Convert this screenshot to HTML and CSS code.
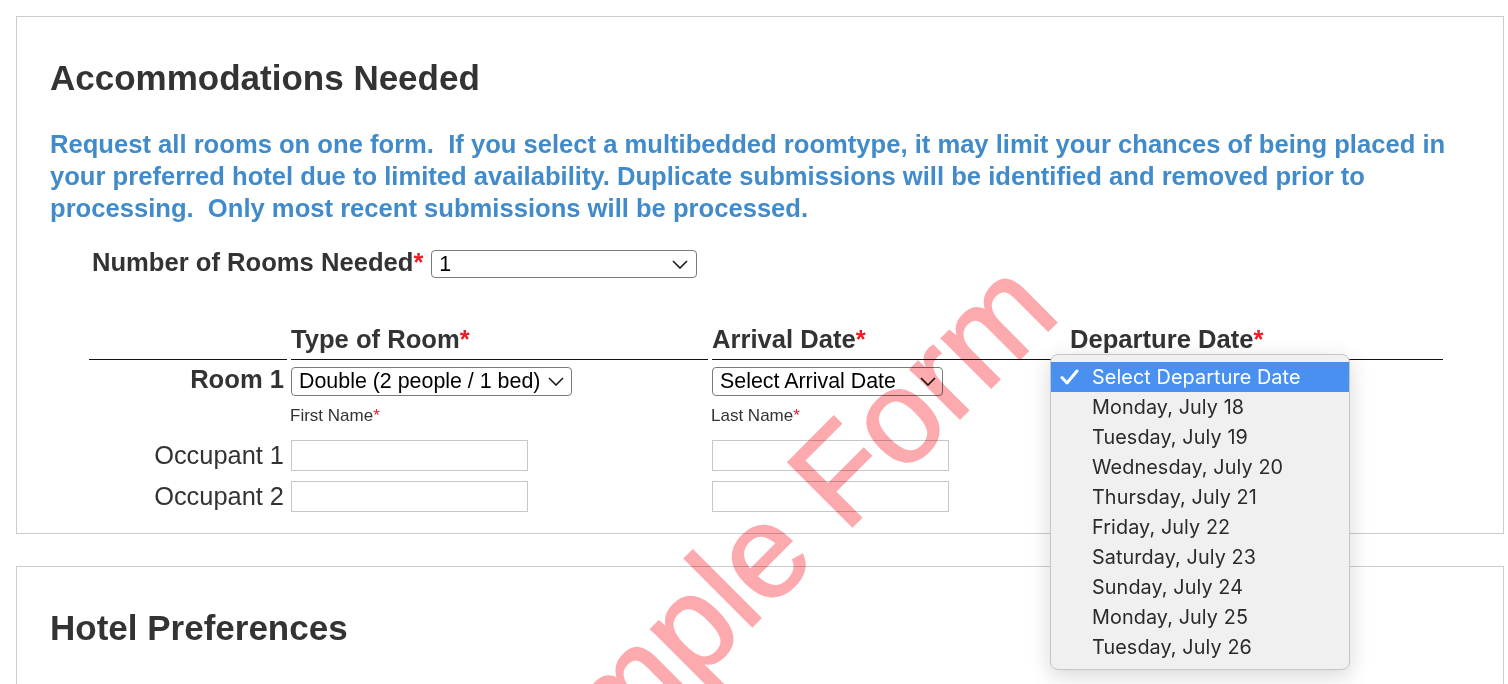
FILE: index.html
```html
<!DOCTYPE html>
<html lang="en">
<head>
  <meta charset="UTF-8">
  <meta name="viewport" content="width=device-width, initial-scale=1.0">
  <title>Accommodations Needed</title>
  <link rel="stylesheet" href="styles.css">
</head>
<body>
  <div class="page">
    <div class="card">
      <h2>Accommodations Needed</h2>
      <p class="notice">Request all rooms on one form.&nbsp; If you select a multibedded roomtype, it may limit your chances of being placed in<br>your preferred hotel due to limited availability. Duplicate submissions will be identified and removed prior to<br>processing.&nbsp; Only most recent submissions will be processed.</p>

      <div class="count-row">
        <label class="count-label">Number of Rooms Needed<span class="req">*</span></label>
        <div class="select select-count">
          <span>1</span>
          <svg class="chevron" width="16" height="9" viewBox="0 0 16 9"><polyline points="1,1 8,8 15,1"/></svg>
        </div>
      </div>

      <div class="rooms">
        <div class="th"></div>
        <div class="th">Type of Room<span class="req">*</span></div>
        <div class="th">Arrival Date<span class="req">*</span></div>
        <div class="th">Departure Date<span class="req">*</span></div>

        <div class="room-label">Room 1</div>
        <div class="room-cell">
          <div class="select">
            <span>Double (2 people / 1 bed)</span>
            <svg class="chevron" width="16" height="9" viewBox="0 0 16 9"><polyline points="1,1 8,8 15,1"/></svg>
          </div>
        </div>
        <div class="room-cell">
          <div class="select select-arrival">
            <span>Select Arrival Date</span>
            <svg class="chevron" width="16" height="9" viewBox="0 0 16 9"><polyline points="1,1 8,8 15,1"/></svg>
          </div>
        </div>
        <div class="room-cell departure">
          <div class="select select-departure"></div>
          <!-- open list of the departure select -->
          <ul class="menu">
            <li class="selected"><span class="check"><svg width="19" height="16" viewBox="0 0 19 16"><polyline points="2,8.5 7,14 17,2"/></svg></span>Select Departure Date</li>
            <li><span class="check"></span>Monday, July 18</li>
            <li><span class="check"></span>Tuesday, July 19</li>
            <li><span class="check"></span>Wednesday, July 20</li>
            <li><span class="check"></span>Thursday, July 21</li>
            <li><span class="check"></span>Friday, July 22</li>
            <li><span class="check"></span>Saturday, July 23</li>
            <li><span class="check"></span>Sunday, July 24</li>
            <li><span class="check"></span>Monday, July 25</li>
            <li><span class="check"></span>Tuesday, July 26</li>
          </ul>
        </div>

        <div></div>
        <div class="sub">First Name<span class="req">*</span></div>
        <div class="sub">Last Name<span class="req">*</span></div>
        <div></div>

        <div class="occ-label first">Occupant 1</div>
        <div class="occ-cell first"><input type="text"></div>
        <div class="occ-cell first"><input type="text"></div>
        <div></div>

        <div class="occ-label">Occupant 2</div>
        <div class="occ-cell"><input type="text"></div>
        <div class="occ-cell"><input type="text"></div>
        <div></div>
      </div>
    </div>

    <div class="card card-tall">
      <h2>Hotel Preferences</h2>
    </div>

    <div class="watermark">Sample Form</div>
  </div>
</body>
</html>
```

FILE: styles.css
```css
html, body {
  margin: 0;
  overflow: hidden;
  background: #fff;
}
body {
  font-family: "Liberation Sans", Arial, sans-serif;
  color: #333;
}
.page {
  position: relative;
  padding: 16px 4px 0 16px;
}
.card {
  border: 1px solid #ccc;
  background: #fff;
  padding: 41px 33px 21px;
}
.card-tall {
  margin-top: 32px;
  height: 300px;
}
h2 {
  margin: 0;
  font-size: 35px;
  line-height: 40px;
  font-weight: bold;
  color: #333;
}
.notice {
  margin: 30px 0 0;
  font-size: 25.6px;
  line-height: 32px;
  font-weight: bold;
  color: #428bca;
  white-space: nowrap;
}
.req {
  color: #ee1c25;
}
.count-row {
  display: flex;
  align-items: baseline;
  margin-top: 24px;
  padding-left: 42px;
}
.count-label {
  font-size: 25.6px;
  line-height: 29px;
  font-weight: bold;
  margin-right: 8px;
}
.select {
  display: flex;
  align-items: center;
  box-sizing: border-box;
  width: fit-content;
  height: 28px;
  border: 1px solid #7a7a7a;
  border-radius: 4px;
  padding: 0 7px 0 7px;
  font-size: 21.4px;
  line-height: 26px;
  color: #000;
  background: #fff;
  white-space: nowrap;
}
.select span {
  flex: 1;
}
.chevron {
  margin-left: 8px;
  fill: none;
  stroke: #1a1a1a;
  stroke-width: 1.6;
}
.select-count {
  width: 266px;
  padding-right: 8px;
}
.select-arrival {
  width: 231px;
  padding-right: 6px;
}
.select-departure {
  width: 260px;
}
.rooms {
  display: grid;
  grid-template-columns: 198px 417px 354px 373px;
  column-gap: 4px;
  margin-top: 47px;
  margin-left: 39px;
}
.th {
  font-size: 25.6px;
  line-height: 29px;
  font-weight: bold;
  padding-bottom: 5px;
  border-bottom: 1px solid #111;
}
.room-label {
  font-size: 25.6px;
  line-height: 29px;
  font-weight: bold;
  text-align: right;
  padding: 5px 3px 0 0;
}
.room-cell {
  padding-top: 7px;
}
.room-cell .select {
  height: 29px;
  line-height: 27px;
}
.departure {
  position: relative;
}
.sub {
  font-size: 17px;
  line-height: 20px;
  padding-top: 10px;
  margin-left: -1px;
}
.occ-label {
  font-size: 25.4px;
  line-height: 29px;
  text-align: right;
  padding-right: 3px;
  align-self: end;
  margin-bottom: 1px;
}
.occ-cell {
  padding-top: 10px;
}
.occ-cell.first {
  padding-top: 14px;
}
input {
  display: block;
  box-sizing: border-box;
  width: 237px;
  height: 31px;
  border: 1px solid #c8c8c8;
  border-radius: 0;
  margin: 0;
  font-size: 18px;
}
.menu {
  position: absolute;
  left: -20px;
  top: -6px;
  z-index: 10;
  box-sizing: border-box;
  width: 300px;
  margin: 0;
  padding: 7px 0;
  list-style: none;
  background: #f0f0f0;
  border: 1px solid #c6c6c6;
  border-radius: 8px;
  box-shadow: 0 6px 22px rgba(0, 0, 0, 0.16);
  font-family: Inter, "Noto Sans", sans-serif;
  font-size: 19.8px;
  letter-spacing: 0.1px;
  color: #2a2a2a;
}
.menu li {
  display: flex;
  align-items: center;
  height: 30px;
  line-height: 30px;
}
.menu li.selected {
  background: #4a90f0;
  color: #fff;
}
.check {
  display: flex;
  align-items: center;
  width: 41px;
  padding-left: 9px;
  box-sizing: border-box;
}
.check svg {
  fill: none;
  stroke: #fff;
  stroke-width: 3;
  stroke-linecap: round;
  stroke-linejoin: round;
}
.watermark {
  position: absolute;
  left: 503px;
  top: 765px;
  z-index: 5;
  font-family: "Liberation Sans", Arial, sans-serif;
  font-size: 132px;
  line-height: 132px;
  color: #fcaaae;
  -webkit-text-stroke: 2px #fcaaae;
  mix-blend-mode: multiply;
  white-space: nowrap;
  transform-origin: 0 112px;
  transform: rotate(-45deg);
  pointer-events: none;
}
```
